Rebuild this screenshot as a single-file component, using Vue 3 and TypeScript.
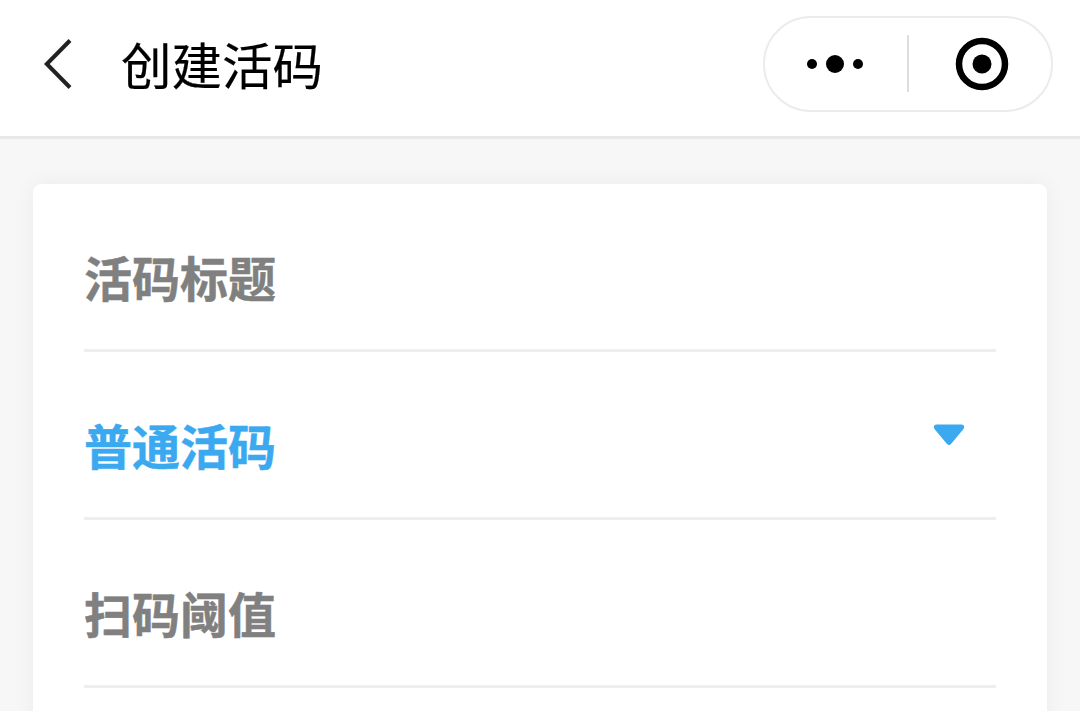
<script setup lang="ts">
interface Row { label: string; active?: boolean }
const rows: Row[] = [
  { label: '活码标题' },
  { label: '普通活码', active: true },
  { label: '扫码阈值' },
]
</script>

<template>
  <div class="page">
    <header class="nav">
      <div class="nav-left">
        <svg class="back" width="30" height="52" viewBox="0 0 30 52">
          <path d="M27 3.5 L3.8 27 L27 50.5" fill="none" stroke="#222" stroke-width="4" />
        </svg>
        <h1 class="title">创建活码</h1>
      </div>
      <div class="capsule">
        <div class="cap-btn more">
          <i class="dot small"></i><i class="dot big"></i><i class="dot small"></i>
        </div>
        <div class="sep"></div>
        <div class="cap-btn target">
          <svg width="54" height="54" viewBox="0 0 54 54">
            <circle cx="27" cy="27" r="23" fill="none" stroke="#000" stroke-width="6.5" />
            <circle cx="27" cy="27" r="9.5" fill="#000" />
          </svg>
        </div>
      </div>
    </header>
    <main class="content">
      <section class="card">
        <div v-for="row in rows" :key="row.label" class="row">
          <span class="label" :class="{ active: row.active }">{{ row.label }}</span>
          <svg v-if="row.active" class="caret" width="32" height="22" viewBox="0 0 32 22">
            <path d="M4 0.5 H28 Q32 0.5 31 4 Q30 6 28 8 L18 20 Q16 21.8 14 20 L4 8 Q2 6 1 4 Q0 0.5 4 0.5 Z" fill="#3aa9f0" />
          </svg>
        </div>
      </section>
    </main>
  </div>
</template>

<style scoped>
.page {
  width: 1080px;
  height: 711px;
  overflow: hidden;
  background: #f7f7f7;
  font-family: "Noto Sans CJK SC", "Noto Sans", sans-serif;
}
.nav {
  height: 136px;
  background: #fff;
  border-bottom: 3px solid #e8e8e8;
  display: flex;
  align-items: flex-start;
  justify-content: space-between;
  padding: 0 27px 0 43px;
}
.nav-left {
  display: flex;
  align-items: center;
  height: 126px;
}
.back {
  margin-right: 48px;
}
.title {
  margin: 0;
  font-size: 50.5px;
  font-weight: 400;
  color: #000;
  line-height: 1;
  -webkit-text-stroke: 0.2px #000;
}
.capsule {
  margin-top: 16px;
  width: 290px;
  height: 96px;
  box-sizing: border-box;
  border: 2px solid #ebebeb;
  border-radius: 48px;
  background: #fff;
  display: flex;
  align-items: center;
}
.cap-btn {
  flex: 0 0 142px;
  box-sizing: border-box;
  display: flex;
  align-items: center;
  justify-content: center;
}
.more {
  gap: 9px;
  padding-right: 2px;
}
.target {
  padding-left: 4px;
}
.dot {
  display: block;
  border-radius: 50%;
  background: #000;
}
.dot.small {
  width: 10px;
  height: 10px;
}
.dot.big {
  width: 18px;
  height: 18px;
}
.sep {
  width: 2px;
  height: 57px;
  margin-top: -2px;
  background: #dedede;
}
.content {
  padding: 45px 33px 0;
}
.card {
  background: #fff;
  border-radius: 8px;
  padding: 0 51px;
  min-height: 600px;
  box-shadow: 0 0 22px rgba(0, 0, 0, 0.05);
}
.row {
  box-sizing: content-box;
  height: 147px;
  border-bottom: 3px solid #eeeeee;
  display: flex;
  align-items: center;
  justify-content: space-between;
  padding: 18px 31px 0 0;
}
.label {
  font-size: 48px;
  font-weight: 700;
  color: #808080;
  line-height: 1;
  -webkit-text-stroke: 0.5px #808080;
}
.label.active {
  color: #3aa9f0;
  -webkit-text-stroke-color: #3aa9f0;
}
.caret {
  margin-top: -18px;
}
</style>
